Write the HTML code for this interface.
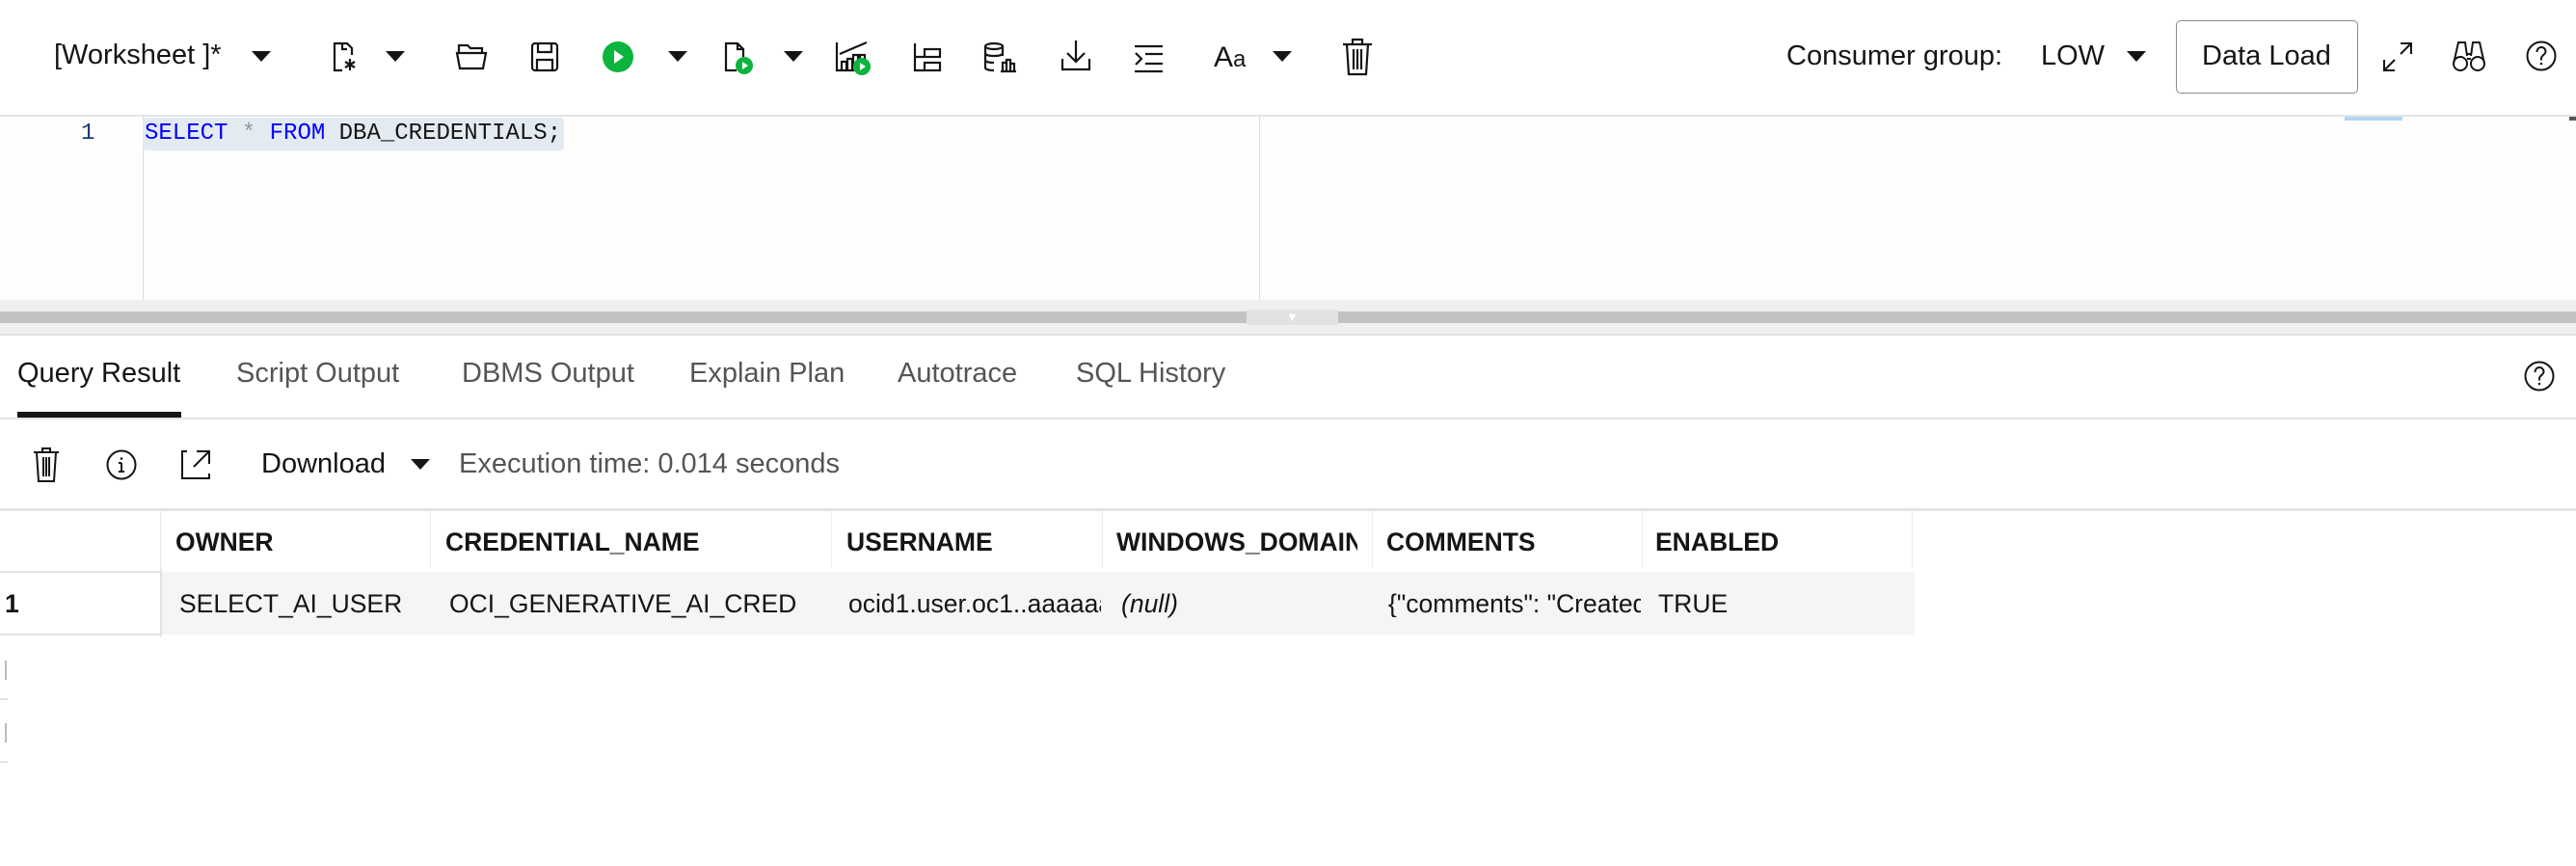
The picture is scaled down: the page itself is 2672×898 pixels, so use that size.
<!DOCTYPE html>
<html><head><meta charset="utf-8"><style>
*{margin:0;padding:0;box-sizing:border-box}
body{width:2672px;height:898px;background:#fff;position:relative;overflow:hidden;font-family:"Liberation Sans",sans-serif;color:#161513}
.a{position:absolute}
.t{position:absolute;white-space:nowrap;line-height:1}
svg{position:absolute;overflow:visible}
.car{position:absolute;width:0;height:0;border-left:10px solid transparent;border-right:10px solid transparent;border-top:11px solid #161513}
</style></head><body>
<!-- toolbar -->
<div class="t" style="left:56px;top:43px;font-size:29px">[Worksheet ]*</div>
<div class="car" style="left:261px;top:53px"></div>
<svg style="left:345px;top:44px" width="28" height="30" fill="none" stroke="#161513" stroke-width="2.2"><path d="M10 1H2v28h8M10 1h5l5 5v7M10 1v6h5"/><path d="M18 17v12M13 20l10 6M23 20l-10 6"/></svg>
<div class="car" style="left:400px;top:53px"></div>
<svg style="left:473px;top:46px" width="32" height="26" fill="none" stroke="#161513" stroke-width="2.2"><path d="M3 8V1h9l3 3h12v4M1 9h30l-3 16H4z"/></svg>
<svg style="left:551px;top:44px" width="28" height="30" fill="none" stroke="#161513" stroke-width="2.2"><rect x="1" y="1" width="26" height="28" rx="3"/><path d="M7 1v9h14V1M6 29V18h16v11"/></svg>
<svg style="left:625px;top:43px" width="32" height="32"><ellipse cx="16" cy="16" rx="16" ry="16" fill="#0bb43c"/><path d="M12 9l10 7-10 7z" fill="#fff"/></svg>
<div class="car" style="left:693px;top:53px"></div>
<svg style="left:751px;top:44px" width="32" height="34" fill="none" stroke="#161513" stroke-width="2.2"><path d="M13 29H2V1h12l6 6v8M14 1v6h6"/><circle cx="21" cy="24" r="9" fill="#0bb43c" stroke="none"/><path d="M19 20l6 4-6 4z" fill="#fff" stroke="none"/></svg>
<div class="car" style="left:813px;top:53px"></div>
<svg style="left:867px;top:44px" width="36" height="34" fill="none" stroke="#161513" stroke-width="2.2"><path d="M1 0v29h18M4 12L32 0M6 29V20h5v9M12 29V17h5v12M18 26V13h5v6M25 19v-6h5v6"/><circle cx="27" cy="25" r="9" fill="#0bb43c" stroke="none"/><path d="M25 21l6 4-6 4z" fill="#fff" stroke="none"/></svg>
<svg style="left:947px;top:45px" width="30" height="30" fill="none" stroke="#161513" stroke-width="2.2"><path d="M2 0v28h10M2 14h10"/><rect x="12" y="6" width="16" height="8"/><rect x="12" y="20" width="16" height="8"/></svg>
<svg style="left:1021px;top:44px" width="34" height="32" fill="none" stroke="#161513" stroke-width="2.2"><ellipse cx="10" cy="4" rx="9" ry="3"/><path d="M1 4v22c0 2 4 3 9 3M19 4v10M1 11c0 2 4 3 9 3s9-1 9-3M1 18c0 2 4 3 9 3"/><path d="M19 30V21h4v9M23 30V18h4v12M27 30v-8h4v8M17 30h16"/></svg>
<svg style="left:1101px;top:42px" width="30" height="32" fill="none" stroke="#161513" stroke-width="2.2"><path d="M15 0v22M6 13l9 9 9-9M1 19v11h28V19"/></svg>
<svg style="left:1177px;top:47px" width="30" height="28" fill="none" stroke="#161513" stroke-width="2.2"><path d="M0 1h29M0 27h29M11 9h18M11 19h18M1 8l6 6-6 6"/></svg>
<div class="t" style="left:1259px;top:45px;font-size:30px">A<span style="font-size:24px">a</span></div>
<div class="car" style="left:1320px;top:53px"></div>
<svg style="left:1393px;top:40px" width="30" height="38" fill="none" stroke="#161513" stroke-width="2.2"><path d="M0 6h30M10 6V1h10v5M4 6l2 31h18l2-31M11 11v21M15 11v21M19 11v21"/></svg>
<div class="t" style="left:1853px;top:44px;font-size:29px">Consumer group:</div>
<div class="t" style="left:2117px;top:44px;font-size:29px">LOW</div>
<div class="car" style="left:2206px;top:53px"></div>
<div class="a" style="left:2257px;top:21px;width:189px;height:76px;border:1.5px solid #8a8a8a;border-radius:5px"></div>
<div class="t" style="left:2284px;top:44px;font-size:29px">Data Load</div>
<svg style="left:2472px;top:44px" width="30" height="30" fill="none" stroke="#161513" stroke-width="2"><path d="M18 1h11v11M29 1L18 12M1 18v11h11M1 29l11-11"/></svg>
<svg style="left:2544px;top:42px" width="34" height="32" fill="none" stroke="#161513" stroke-width="2"><circle cx="8" cy="24" r="7"/><circle cx="26" cy="24" r="7"/><path d="M1 24L6 2h7l2 14M33 24L28 2h-7l-2 14M15 14h4M15 19h4"/></svg>
<svg style="left:2620px;top:42px" width="32" height="32" fill="none" stroke="#161513" stroke-width="2"><circle cx="16" cy="16" r="14.5"/><path d="M11.5 12c0-3 2-5 4.5-5s4.5 2 4.5 4.5c0 3-4.5 4-4.5 7v2"/><circle cx="16" cy="24" r="1.3" fill="#161513" stroke="none"/></svg>
<!-- editor -->
<div class="a" style="left:0;top:119px;width:2672px;height:2px;background:#e4e4e4"></div>
<div class="a" style="left:0;top:121px;width:2672px;height:190px;background:#fdfdfb"></div>
<div class="a" style="left:148px;top:121px;width:1px;height:190px;background:#ddd"></div>
<div class="a" style="left:1306px;top:121px;width:1px;height:190px;background:#ddd"></div>
<div class="a" style="left:2432px;top:121px;width:60px;height:4px;background:#b4d4f4"></div>
<div class="a" style="left:2665px;top:121px;width:7px;height:4px;background:#555"></div>
<div class="a" style="left:148px;top:122px;width:437px;height:34px;background:#e4eaf2;border-radius:4px"></div>
<div class="t" style="left:84px;top:127px;font-size:24px;font-family:'Liberation Mono',monospace;color:#1a3a7a">1</div>
<div class="t" style="left:150px;top:127px;font-size:24px;font-family:'Liberation Mono',monospace"><span style="color:#0000ff">SELECT</span><span style="color:#999"> * </span><span style="color:#0000ff">FROM</span> DBA_CREDENTIALS;</div>
<!-- splitter -->
<div class="a" style="left:0;top:311px;width:2672px;height:37px;background:#efefed"></div>
<div class="a" style="left:0;top:323px;width:1293px;height:12px;background:#c2c2c2"></div>
<div class="a" style="left:1388px;top:323px;width:1284px;height:12px;background:#c2c2c2"></div>
<div class="a" style="left:1293px;top:321px;width:95px;height:16px;background:#e2e2e2"></div>
<div class="t" style="left:1334px;top:322px;font-size:13px;color:#fff">▼</div>
<div class="a" style="left:0;top:346px;width:2672px;height:2px;background:#e0e0de"></div>
<!-- tabs -->
<div class="t" style="left:18px;top:373px;font-size:29px">Query Result</div>
<div class="t" style="left:245px;top:373px;font-size:29px;color:#555">Script Output</div>
<div class="t" style="left:479px;top:373px;font-size:29px;color:#555">DBMS Output</div>
<div class="t" style="left:715px;top:373px;font-size:29px;color:#555">Explain Plan</div>
<div class="t" style="left:931px;top:373px;font-size:29px;color:#555">Autotrace</div>
<div class="t" style="left:1116px;top:373px;font-size:29px;color:#555">SQL History</div>
<div class="a" style="left:18px;top:427px;width:170px;height:6px;background:#161513"></div>
<div class="a" style="left:0;top:433px;width:2672px;height:2px;background:#e4e4e4"></div>
<svg style="left:2618px;top:374px" width="32" height="32" fill="none" stroke="#161513" stroke-width="2"><circle cx="16" cy="16" r="14.5"/><path d="M11.5 12c0-3 2-5 4.5-5s4.5 2 4.5 4.5c0 3-4.5 4-4.5 7v2"/><circle cx="16" cy="24" r="1.3" fill="#161513" stroke="none"/></svg>
<!-- results toolbar -->
<svg style="left:35px;top:464px" width="26" height="36" fill="none" stroke="#161513" stroke-width="2"><path d="M0 5h26M9 5V1h8v4M3 5l2 30h16l2-30M10 10v20M13 10v20M16 10v20"/></svg>
<svg style="left:110px;top:466px" width="32" height="32" fill="none" stroke="#161513" stroke-width="2"><circle cx="16" cy="16" r="14.5"/><path d="M16 14v9M13 23h6M13 14h3"/><circle cx="16" cy="9.5" r="1.3" fill="#161513" stroke="none"/></svg>
<svg style="left:188px;top:467px" width="30" height="30" fill="none" stroke="#161513" stroke-width="2"><path d="M6 1H1v28h28v-5M16 1h13v13M29 1L13 17"/></svg>
<div class="t" style="left:271px;top:467px;font-size:29px">Download</div>
<div class="car" style="left:426px;top:476px"></div>
<div class="t" style="left:476px;top:467px;font-size:29px;color:#555">Execution time: 0.014 seconds</div>
<!-- table -->
<div class="a" style="left:0;top:527px;width:2672px;height:3px;background:#e4e4e4"></div>
<div class="a" style="left:166px;top:530px;width:1817px;height:60px;border-left:1px solid #e6e6e6"></div>
<div class="a" style="left:446px;top:530px;width:1px;height:60px;background:#eee"></div>
<div class="a" style="left:862px;top:530px;width:1px;height:60px;background:#eee"></div>
<div class="a" style="left:1143px;top:530px;width:1px;height:60px;background:#eee"></div>
<div class="a" style="left:1423px;top:530px;width:1px;height:60px;background:#eee"></div>
<div class="a" style="left:1703px;top:530px;width:1px;height:60px;background:#eee"></div>
<div class="a" style="left:1983px;top:530px;width:1px;height:60px;background:#eee"></div>
<div class="t" style="left:182px;top:549px;font-size:26.5px;font-weight:bold">OWNER</div>
<div class="t" style="left:462px;top:549px;font-size:26.5px;font-weight:bold">CREDENTIAL_NAME</div>
<div class="t" style="left:878px;top:549px;font-size:26.5px;font-weight:bold">USERNAME</div>
<div class="t" style="left:1158px;top:549px;font-size:26.5px;font-weight:bold;width:250px;overflow:hidden">WINDOWS_DOMAIN</div>
<div class="t" style="left:1438px;top:549px;font-size:26.5px;font-weight:bold">COMMENTS</div>
<div class="t" style="left:1717px;top:549px;font-size:26.5px;font-weight:bold">ENABLED</div>
<div class="a" style="left:0;top:592px;width:166px;height:2px;background:#e4e4e4"></div>
<div class="a" style="left:0;top:657px;width:166px;height:2px;background:#e4e4e4"></div>
<div class="a" style="left:166px;top:590px;width:2px;height:70px;background:#e4e4e4"></div>
<div class="a" style="left:168px;top:593px;width:1818px;height:65px;background:#f5f5f5"></div>
<div class="t" style="left:5px;top:613px;font-size:26.5px;font-weight:bold">1</div>
<div class="t" style="left:186px;top:613px;font-size:26.5px">SELECT_AI_USER</div>
<div class="t" style="left:466px;top:613px;font-size:26.5px">OCI_GENERATIVE_AI_CRED</div>
<div class="t" style="left:880px;top:613px;font-size:26.5px;width:262px;overflow:hidden">ocid1.user.oc1..aaaaaaaa</div>
<div class="t" style="left:1163px;top:613px;font-size:26.5px;font-style:italic">(null)</div>
<div class="t" style="left:1440px;top:613px;font-size:26.5px;width:262px;overflow:hidden">{"comments": "Created</div>
<div class="t" style="left:1720px;top:613px;font-size:26.5px">TRUE</div>
<div class="a" style="left:5px;top:685px;width:2px;height:20px;background:#bbb"></div>
<div class="a" style="left:0;top:724px;width:8px;height:2px;background:#e4e4e4"></div>
<div class="a" style="left:5px;top:750px;width:2px;height:20px;background:#bbb"></div>
<div class="a" style="left:0;top:789px;width:8px;height:2px;background:#e4e4e4"></div>
</body></html>
